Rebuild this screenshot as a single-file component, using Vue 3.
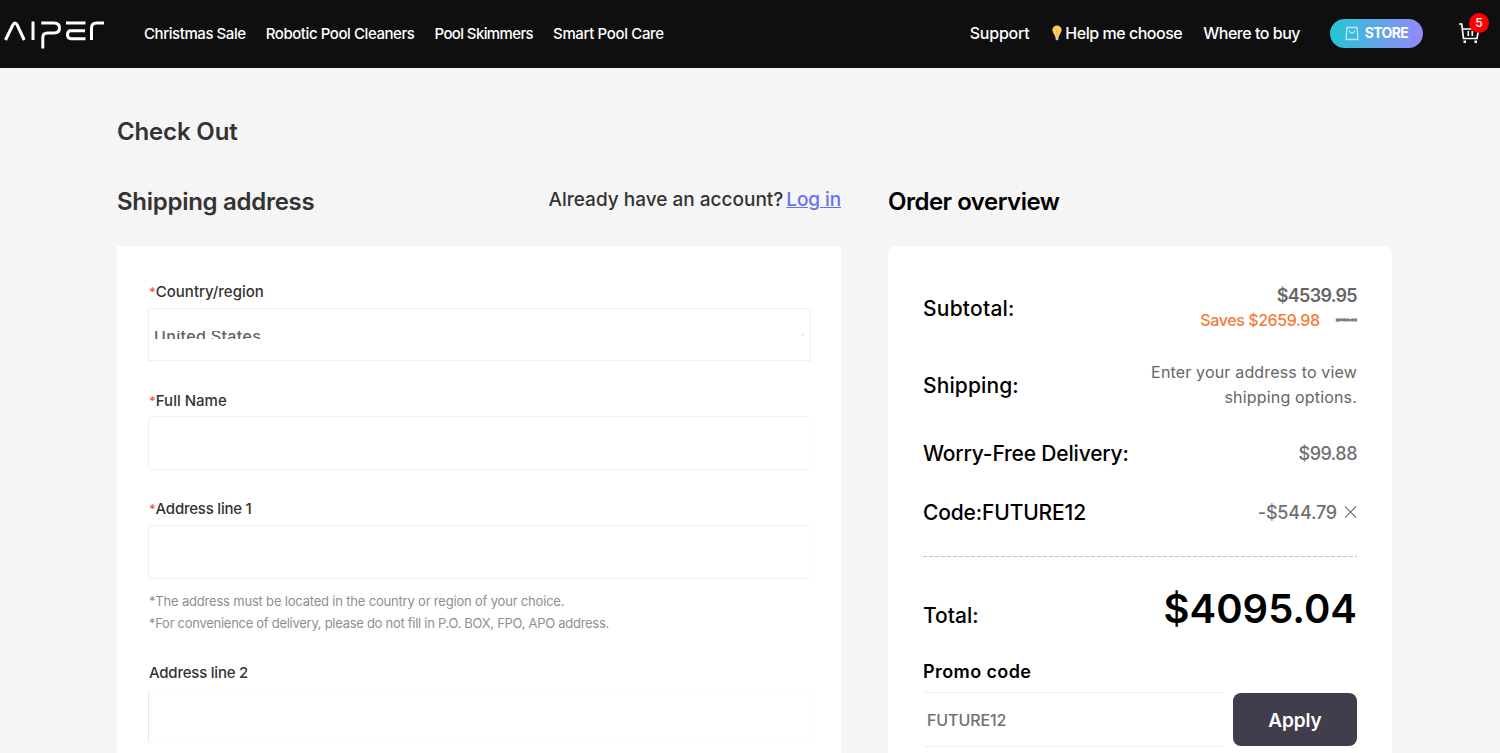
<template>
  <div class="page">
    <header class="header">
      <svg class="logo" viewBox="0 0 102 32" width="102" height="32">
        <g fill="none" stroke="#fff" stroke-width="3">
          <path d="M1.500 23 8.800 8Q11 4 13.200 8L20.200 23" />
          <path d="M29 4.500V23" />
          <path d="M37.300 6H50Q55.500 6 55.500 11Q55.500 16 50 16H43.500Q38.800 16 38.800 20.500V31.500" />
          <path d="M62 6H81.500M81 13.800H66.500Q63.500 13.800 63.500 17.800Q63.500 21.700 67 21.700H81.500" />
          <path d="M87.500 23V11Q87.500 6 92.500 6H100" />
        </g>
      </svg>
      <nav class="nav">
        <a v-for="item in menu" :key="item">{{ item }}</a>
      </nav>
      <nav class="tools">
        <a class="support">Support</a>
        <a class="help">
          <svg viewBox="0 0 10 16" width="10" height="16">
            <path d="M5 .5a4.600 4.600 0 0 1 4.600 4.600C9.600 7.500 7.500 9 6.700 12H3.300C2.500 9 .4 7.500 .4 5.100A4.600 4.600 0 0 1 5 .5Z" fill="#ffca55" />
            <path d="M4.700 5.500h.6l-.1 6h-.4z" fill="#e79c31" />
            <path d="M3.500 12h3v2.300L5 15.500l-1.500-1.200z" fill="#c8d3dc" />
          </svg>
          <span>Help me choose</span>
        </a>
        <a class="where">Where to buy</a>
      </nav>
      <a class="store">
        <svg viewBox="0 0 14 15" width="14" height="15" fill="none" stroke="#b8ecfa" stroke-width="1.300">
          <path d="M2 1.500h10l1 12H1z" stroke-linejoin="round" />
          <path d="M4 4.500Q7 9.500 10 4.500" />
        </svg>
        <span>STORE</span>
      </a>
      <a class="cart">
        <svg viewBox="0 0 22 22" width="22" height="22" fill="none" stroke="#fff" stroke-width="1.700">
          <path d="M0 2H2.700L4.500 16.500H18L19.500 8" />
          <path d="M3.500 7H19M9.300 9V14M13.300 9V14" />
          <path d="M4.500 19.800H7M15.500 19.800H18" stroke-width="2.400" />
        </svg>
        <span class="badge">5</span>
      </a>
    </header>

    <main class="main">
      <h1 class="title">Check Out</h1>
      <div class="columns">
        <section class="shipping">
          <div class="section-head">
            <h2>Shipping address</h2>
            <p class="account">
              <span class="question">Already have an account?</span>
              <a class="login">Log in</a>
            </p>
          </div>
          <form class="card form">
            <div class="field">
              <label><i>*</i>Country/region</label>
              <div class="select">
                <span class="value">United States</span>
                <svg viewBox="0 0 4 3" width="3" height="2" fill="none" stroke="#bbb"><path d="M0 0 2 2 4 0" /></svg>
              </div>
            </div>
            <div class="field">
              <label class="name"><i>*</i>Full Name</label>
              <input v-model="form.name" type="text" />
            </div>
            <div class="field">
              <label class="line"><i>*</i>Address line 1</label>
              <input v-model="form.address1" type="text" />
              <div class="hints">
                <p class="hint-country">*The address must be located in the country or region of your choice.</p>
                <p class="hint-box">*For convenience of delivery, please do not fill in P.O. BOX, FPO, APO address.</p>
              </div>
            </div>
            <div class="field">
              <label class="line">Address line 2</label>
              <input v-model="form.address2" class="faint" type="text" />
            </div>
          </form>
        </section>

        <section class="overview">
          <div class="section-head">
            <h2>Order overview</h2>
          </div>
          <div class="card summary">
            <div class="row subtotal">
              <span class="label">Subtotal:</span>
              <div class="amount">
                <strong>$4539.95</strong>
                <p class="saves"><span>Saves $2659.98</span><del>$7199.93</del></p>
              </div>
            </div>
            <div class="row delivery">
              <span class="label">Shipping:</span>
              <p class="note">Enter your address to view<br />shipping options.</p>
            </div>
            <div class="row worry">
              <span class="label">Worry-Free Delivery:</span>
              <span class="price">$99.88</span>
            </div>
            <div class="row code">
              <span class="label">Code:FUTURE12</span>
              <span class="price">
                -$544.79
                <svg viewBox="0 0 14 14" width="13" height="14" stroke="#666" stroke-width="1.100"><path d="M1 1 13 13M13 1 1 13" /></svg>
              </span>
            </div>
            <svg class="divider" width="434" height="1"><path d="M0 .5H434" stroke="#c2c2c2" stroke-dasharray="4 2" /></svg>
            <div class="row total">
              <span class="label">Total:</span>
              <span class="sum">$4095.04</span>
            </div>
            <h3>Promo code</h3>
            <div class="promo">
              <input v-model="promo" type="text" />
              <button type="button">Apply</button>
            </div>
          </div>
        </section>
      </div>
    </main>
  </div>
</template>

<script setup>
import { reactive, ref } from "vue";

const menu = ["Christmas Sale", "Robotic Pool Cleaners", "Pool Skimmers", "Smart Pool Care"];

const form = reactive({
  name: "",
  address1: "",
  address2: "",
});
const promo = ref("FUTURE12");
</script>

<style>
html,
body {
  background-color: #f5f5f5;
  overflow: hidden;
}
</style>

<style scoped>
.page {
  height: 753px;
  overflow: hidden;
  font-family: Inter, "Liberation Sans", sans-serif;
  font-weight: 500;
  color: #333;
  white-space: nowrap;
}

h1,
h2,
h3,
p {
  margin: 0;
}

.header {
  box-sizing: border-box;
  display: flex;
  align-items: center;
  height: 68px;
  padding: 0 19px 2px 4px;
  background-color: #0f0f0f;
  color: #fff;
}

.logo {
  margin-right: 38px;
}

.nav {
  display: flex;
  gap: 20px;
  font-size: 15px;
  letter-spacing: -0.43px;
}

.nav a:nth-child(3) {
  letter-spacing: -0.62px;
}

.nav a:nth-child(4) {
  letter-spacing: -0.36px;
}

.tools {
  display: flex;
  margin-left: auto;
  font-size: 16px;
  letter-spacing: -0.48px;
}

.support {
  letter-spacing: -0.25px;
}

.help {
  display: flex;
  align-items: center;
  gap: 3px;
  margin: 0 21px 0 23px;
}

.store {
  display: flex;
  align-items: center;
  justify-content: center;
  gap: 6px;
  width: 93px;
  height: 29px;
  margin-left: 30px;
  border-radius: 15px;
  background: linear-gradient(100deg, #25c5d5 5%, #9489fa 95%);
  font-size: 14px;
  font-weight: 700;
  letter-spacing: -0.6px;
}

.store span {
  margin-top: -1px;
}

.cart {
  position: relative;
  display: flex;
  margin-left: 36px;
}

.badge {
  position: absolute;
  top: -9px;
  left: 10px;
  width: 20px;
  height: 20px;
  border-radius: 50%;
  background-color: #f00;
  font-size: 12px;
  line-height: 20px;
  text-align: center;
}

.main {
  padding: 47px 108px 0 117px;
}

.title,
h2 {
  font-size: 24px;
  font-weight: 600;
  line-height: 34px;
}

.title {
  letter-spacing: -0.15px;
}

h2 {
  letter-spacing: -0.28px;
}

.overview h2 {
  letter-spacing: -0.5px;
}

.columns {
  display: flex;
  gap: 47px;
  margin-top: 36px;
}

.shipping {
  width: 724px;
}

.overview {
  width: 504px;
  color: #000;
}

.section-head {
  display: flex;
  justify-content: space-between;
  height: 61px;
}

.account {
  display: flex;
  gap: 3px;
  font-size: 19px;
  line-height: 30px;
}

.login {
  color: #6672ee;
  letter-spacing: -0.1px;
  text-decoration: underline;
}

.card {
  box-sizing: border-box;
  height: 560px;
  background-color: #fff;
}

.form {
  padding: 35px 30px 0 31px;
}

.field {
  margin-bottom: 28px;
}

.field label {
  box-sizing: border-box;
  display: block;
  height: 27px;
  padding-left: 1px;
  font-size: 15px;
  line-height: 21px;
}

.field .name {
  padding-top: 1px;
}

.field .line {
  letter-spacing: -0.22px;
}

.field i {
  color: #ee5850;
  font-style: normal;
  font-size: 13px;
}

.select,
input {
  box-sizing: border-box;
  width: 100%;
  border: 1px solid #f0f0f0;
  outline: none;
}

.select {
  display: flex;
  align-items: center;
  justify-content: space-between;
  height: 53px;
  padding: 0 6px 0 5px;
}

/* the select shows only a thin slice of its value */
.value {
  height: 8px;
  overflow: hidden;
  font-size: 16px;
  letter-spacing: 0.35px;
  line-height: 10px;
  color: #606266;
}

.field input {
  display: block;
  height: 54px;
  border-right-color: #fdfdfd;
  border-radius: 4px;
}

.field input.faint {
  height: 55px;
  border-color: #fdfdfd;
  border-left-color: #e8e8e8;
}

.hints {
  padding: 11px 0 0 1px;
  font-size: 13px;
  font-weight: 400;
  line-height: 22px;
  color: #8f8f8f;
}

.hint-country {
  letter-spacing: -0.19px;
}

.hint-box {
  letter-spacing: -0.28px;
}

.summary {
  padding: 35px 35px 0;
  border-radius: 8px;
}

.row {
  display: flex;
  align-items: center;
  justify-content: space-between;
}

.label {
  font-size: 21px;
}

.subtotal {
  height: 54px;
}

.subtotal .label {
  letter-spacing: 0.22px;
}

.amount {
  text-align: right;
  color: #666;
}

.amount strong {
  display: block;
  font-size: 18px;
  font-weight: 600;
  letter-spacing: -0.7px;
  line-height: 26px;
}

.saves {
  display: flex;
  align-items: center;
  justify-content: flex-end;
  gap: 16px;
  margin-top: -1px;
  font-size: 16px;
  letter-spacing: -0.4px;
  line-height: 25px;
  color: #f47b3c;
}

.saves del {
  font-size: 5px;
  letter-spacing: -0.1px;
  text-decoration-thickness: 2px;
  color: #808080;
}

.delivery {
  height: 50px;
  margin-top: 25px;
}

.delivery .label {
  padding-top: 1px;
  letter-spacing: 0.12px;
}

.note {
  font-size: 16px;
  font-weight: 400;
  letter-spacing: 0.17px;
  line-height: 25px;
  text-align: right;
  color: #666;
}

.price {
  display: flex;
  align-items: center;
  gap: 7px;
  font-size: 18px;
  letter-spacing: -0.18px;
  color: #707070;
}

.worry {
  height: 34px;
  margin-top: 26px;
  letter-spacing: -0.18px;
}

.worry .price {
  letter-spacing: -0.5px;
}

.code {
  height: 34px;
  margin-top: 25px;
  letter-spacing: -0.15px;
}

.divider {
  display: block;
  margin: 27px 0 0;
}

.total {
  height: 64px;
  margin-top: 19px;
}

.total .label {
  padding-top: 15px;
}

.sum {
  font-size: 40px;
  font-weight: 600;
}

h3 {
  margin-top: 19px;
  font-size: 18px;
  font-weight: 600;
  letter-spacing: 0.4px;
  line-height: 26px;
}

.promo {
  display: flex;
  gap: 8px;
  margin-top: 7px;
}

.promo input {
  width: 302px;
  height: 55px;
  padding: 0 3px;
  border-color: #eee transparent;
  border-radius: 4px;
  font: 500 16px Inter, sans-serif;
  letter-spacing: -0.1px;
  color: #707070;
}

.promo button {
  width: 124px;
  height: 53px;
  margin-top: 1px;
  padding-top: 3px;
  border: 0;
  border-radius: 8px;
  background-color: #403e4c;
  color: #fff;
  font: 600 19px Inter, sans-serif;
  letter-spacing: -0.1px;
}
</style>
